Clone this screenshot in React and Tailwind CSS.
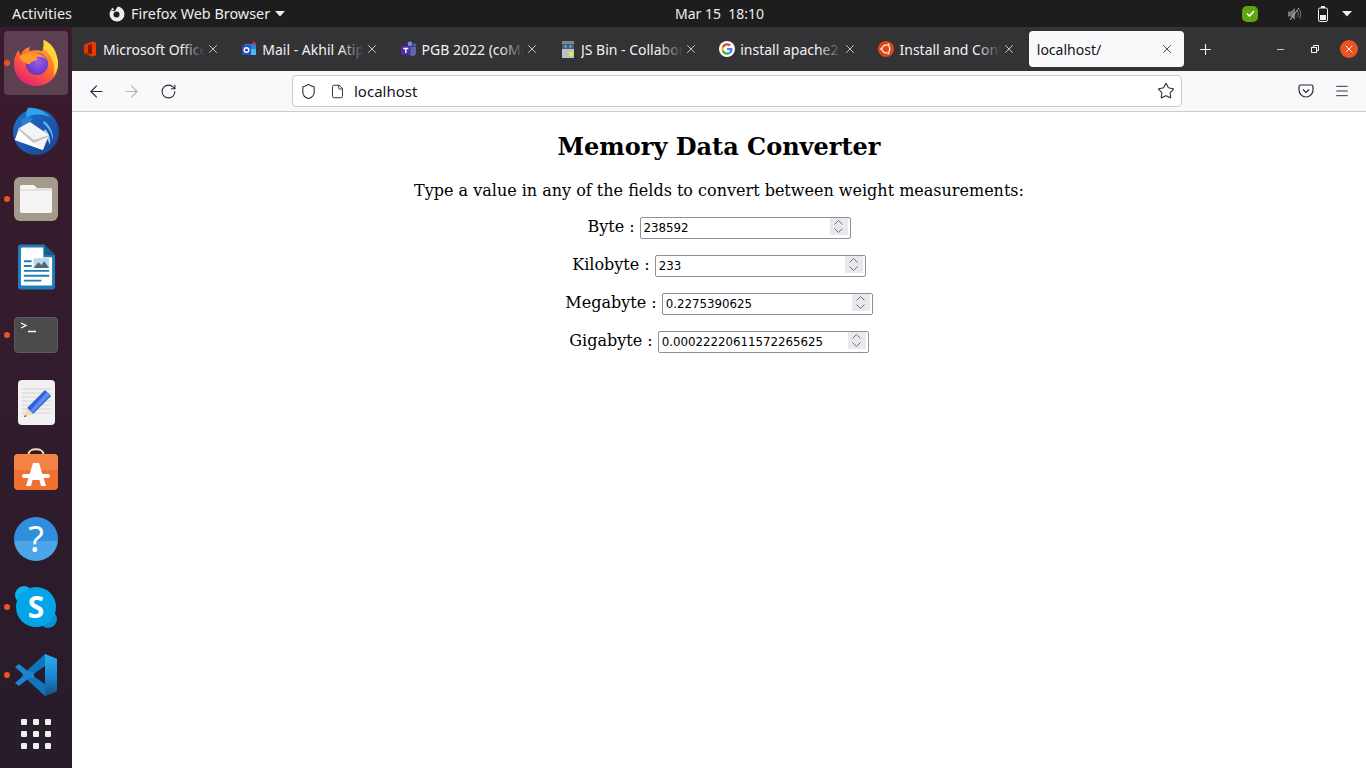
import React from 'react'
import { ArrowLeft, ArrowRight, RotateCw, Shield, File, Star, Menu, X, Plus, Minus } from 'lucide-react'

const OfficeIcon = () => (
    <svg width="14" height="16" viewBox="0 0 14 16">
        <path d="M1 3.500 9 .5l4 1.200v12.600l-4 1.200-8-3z" fill="#d83b01" />
        <path d="M5 4.500 9 3v10l-8-.5 4-.8z" fill="#8f1208" />
        <path d="M9 .5l4 1.200v12.600l-4 1.200z" fill="#eb3c00" />
    </svg>
)

const OutlookIcon = () => (
    <svg width="16" height="16" viewBox="0 0 16 16">
        <rect x="4" y="3" width="11" height="11" fill="#1a8fdc" />
        <rect x="9" y="8" width="6" height="6" fill="#50b4ee" />
        <rect x="1" y="4" width="9" height="10" rx="1" fill="#2a4fc0" />
        <circle cx="5.500" cy="9" r="2.300" fill="none" stroke="#fff" strokeWidth="1.400" />
        <circle cx="13" cy="2.500" r="1.800" fill="#d13438" />
    </svg>
)

const TeamsIcon = () => (
    <svg width="16" height="16" viewBox="0 0 16 16">
        <circle cx="9" cy="3" r="2.400" fill="#7b83eb" />
        <circle cx="13.500" cy="4" r="1.800" fill="#5059c9" />
        <path d="M6 6h9v5a3.500 3.500 0 0 1-7 1z" fill="#6264a7" />
        <rect x="0" y="5" width="9.500" height="9" rx="1" fill="#4b2fa8" />
        <path d="M2.300 7.500h5M4.800 7.500v4.600" stroke="#fff" strokeWidth="1.400" />
    </svg>
)

const JsBinIcon = () => (
    <svg width="14" height="17" viewBox="0 0 14 17">
        <rect x="1" y="0" width="12" height="3" fill="#7b8a92" />
        <rect x="1" y="3" width="12" height="5" fill="#4a5f6b" />
        <rect x="3.500" y="4.500" width="2" height="2" fill="#5ec8f0" />
        <rect x="8.500" y="4.500" width="2" height="2" fill="#5ec8f0" />
        <rect x="1" y="8" width="12" height="9" fill="#b9c2c7" />
        <rect x="8" y="11" width="4" height="4" fill="#f0e63c" />
    </svg>
)

const GoogleIcon = () => (
    <svg width="16" height="16" viewBox="0 0 48 48">
        <circle cx="24" cy="24" r="24" fill="#fff" />
        <g transform="translate(7 7) scale(.71)">
            <path fill="#EA4335" d="M24 9.500c3.500 0 6.700 1.200 9.200 3.600l6.900-6.900C35.900 2.400 30.400 0 24 0 14.600 0 6.500 5.400 2.600 13.200l8 6.200C12.500 13.700 17.800 9.500 24 9.500z" />
            <path fill="#4285F4" d="M46.900 24.500c0-1.600-.1-3.100-.4-4.500H24v9h12.900c-.6 3-2.200 5.500-4.700 7.200l7.700 6c4.500-4.200 7-10.300 7-17.700z" />
            <path fill="#FBBC05" d="M10.500 28.600A14.500 14.500 0 0 1 10.500 19.400l-8-6.200a24 24 0 0 0 0 21.600z" />
            <path fill="#34A853" d="M24 48c6.500 0 11.900-2.100 15.900-5.800l-7.700-6c-2.200 1.500-4.900 2.300-8.200 2.300-6.200 0-11.500-4.200-13.400-9.900l-8 6.200C6.500 42.600 14.600 48 24 48z" />
        </g>
    </svg>
)

const UbuntuIcon = () => (
    <svg width="16" height="16" viewBox="0 0 16 16">
        <circle cx="8" cy="8" r="8" fill="#dd4814" />
        <circle cx="8" cy="8" r="3.800" fill="none" stroke="#fff" strokeWidth="1.300" />
        <circle cx="3.200" cy="8" r="1.300" fill="#fff" stroke="#dd4814" strokeWidth=".5" />
        <circle cx="10.400" cy="3.800" r="1.300" fill="#fff" stroke="#dd4814" strokeWidth=".5" />
        <circle cx="10.400" cy="12.200" r="1.300" fill="#fff" stroke="#dd4814" strokeWidth=".5" />
    </svg>
)

const tabs = [
    { title: 'Microsoft Office Home', icon: <OfficeIcon /> },
    { title: 'Mail - Akhil Atipamula', icon: <OutlookIcon /> },
    { title: 'PGB 2022 (coMakeIT)', icon: <TeamsIcon /> },
    { title: 'JS Bin - Collaborative', icon: <JsBinIcon /> },
    { title: 'install apache2 ubuntu', icon: <GoogleIcon /> },
    { title: 'Install and Configure', icon: <UbuntuIcon /> },
]

const FirefoxIcon = () => (
    <svg width="46" height="46" viewBox="0 0 46 46">
        <defs>
            <linearGradient id="ffBody" x1="0.8" y1="0" x2="0.2" y2="1">
                <stop offset="0" stopColor="#ffbd2e" />
                <stop offset=".5" stopColor="#ff6a2a" />
                <stop offset="1" stopColor="#e5177e" />
            </linearGradient>
            <radialGradient id="ffGlobe" cx=".55" cy=".4" r=".7">
                <stop offset="0" stopColor="#9b5cf0" />
                <stop offset="1" stopColor="#5b2fb8" />
            </radialGradient>
        </defs>
        <path d="M23 46C10 46 1 36 1 24c0-6 2-11 5-14 0 3 1 4 2 5 1-4 4-7 9-8-1 2-1 3 0 4 4-1 8-1 12 0 2-3 2-7 1-11 7 3 11 9 13 15 2 4 2 7 2 10 0 12-10 21-22 21z" fill="url(#ffBody)" />
        <path d="M31 0c7 3 12 10 13 17 2 6 1 13-3 18 1-7 0-15-5-21-2-3-5-4-6-6 1-3 1-5 1-8z" fill="#ffd43a" />
        <circle cx="24" cy="24" r="11" fill="url(#ffGlobe)" />
        <path d="M6 17c4-3 9-5 14-4 6 0 11 2 14 7-3-3-7-4-11-3 2 1 2 3 0 3.500-4 .5-6 2-6 4-5-1-9-4-11-7.500z" fill="#ff9a2a" />
    </svg>
)

const ThunderbirdIcon = () => (
    <svg width="48" height="48" viewBox="0 0 48 48">
        <defs>
            <linearGradient id="tbBird" x1="0" y1="0" x2="1" y2="1">
                <stop offset="0" stopColor="#1b76d2" />
                <stop offset="1" stopColor="#1d3f8e" />
            </linearGradient>
        </defs>
        <circle cx="24" cy="25" r="23" fill="url(#tbBird)" />
        <path d="M16 1c6-1 16 2 22 9-7-3-13-3-17-2-3 1-5 2-7 3 0-4 0-7 2-10z" fill="#2fa3ee" />
        <path d="M9 13c4-3 9-3 12-1l-5 5-6 3z" fill="#2f7fd0" />
        <path d="M32 14c6 4 10 12 9 20-1-7-4-13-10-18z" fill="#5bbcf5" />
        <path d="M33 22c4 4 6 10 5 16-2-5-4-9-7-12z" fill="#8ed0f7" />
        <path d="M7 21 18 15 37 28 31 43 3 33z" fill="#f4f4f4" />
        <path d="M7 21 22 33 37 28 36 30 21 36 6 23z" fill="#c4c4c4" />
        <path d="M3 33 7 23 20 35 31 43z" fill="#ffffff" />
    </svg>
)

const FilesIcon = () => (
    <div className="w-[44px] h-[44px] rounded-[6px] bg-[#a39b8b] flex items-center justify-center">
        <svg width="32" height="28" viewBox="0 0 32 28">
            <path d="M2 0h12l3 3h13a2 2 0 0 1 2 2v21a2 2 0 0 1-2 2H2a2 2 0 0 1-2-2V2a2 2 0 0 1 2-2z" fill="#f6f5f4" />
            <path d="M0 4h15l2-1h13a2 2 0 0 1 2 2v1H0z" fill="#e4e2df" />
        </svg>
    </div>
)

const WriterIcon = () => (
    <svg width="37" height="46" viewBox="0 0 38 46">
        <path d="M3 0h24l11 11v32a3 3 0 0 1-3 3H3a3 3 0 0 1-3-3V3a3 3 0 0 1 3-3z" fill="#1a7fb8" />
        <path d="M4 3h22v10h9v28a1 1 0 0 1-1 1H4a1 1 0 0 1-1-1V4a1 1 0 0 1 1-1z" fill="#fff" />
        <path d="M27 0l11 11H27z" fill="#135f8c" />
        <path d="M6 16h8v2H6zM6 21h8v2H6zM6 26h26v2H6zM6 31h26v2H6zM6 36h18v2H6z" fill="#1a7fb8" />
        <rect x="16" y="14" width="16" height="10" fill="#bcd8e8" />
        <path d="M16 24l5-6 3 3 3-4 5 7z" fill="#4a6a7c" />
    </svg>
)

const TerminalIcon = () => (
    <div className="relative w-[44px] h-[36px] rounded-[4px] bg-[#4b4b4b] border border-[#5c5c5c]">
        <svg className="absolute left-[5px] top-[4px]" width="16" height="11" viewBox="0 0 16 11" fill="none" stroke="#fff" strokeWidth="1.300">
            <path d="M1 1l5 2.500L1 6M8 9.500h8" />
        </svg>
    </div>
)

const GeditIcon = () => (
    <svg width="37" height="46" viewBox="0 0 37 46">
        <rect x="0" y="0" width="37" height="45" rx="4" fill="#f1f1f1" />
        <path d="M4 9h29M4 13h29M4 17h29M4 21h29M4 25h29M4 29h29M4 33h29" stroke="#d2d2d2" strokeWidth="1" />
        <path d="M27 10l6 6-18 18-6-6z" fill="#2e62d9" />
        <path d="M29 12l3 3-18 18-2-2z" fill="#5f8cf0" />
        <path d="M9 28l6 6-9 3z" fill="#f6d9b0" />
        <path d="M7 35l-1 2 2.500-.8z" fill="#333" />
    </svg>
)

const SoftwareIcon = () => (
    <svg className="mb-[4px]" width="44" height="43" viewBox="0 0 44 43">
        <path d="M14.500 8V6.500c0-7 15-7 15 0V8" fill="none" stroke="#f8dcae" strokeWidth="2" />
        <rect x="0" y="6" width="44" height="36" rx="4" fill="#f07030" />
        <path d="M0 22V10a4 4 0 0 1 4-4h36a4 4 0 0 1 4 4v12z" fill="#f38444" />
        <path d="M19 15h6l7 23h-5l-1.500-6h-7L17 38h-5z" fill="#fff" />
        <rect x="8" y="26" width="28" height="4" rx="2" fill="#fff" />
    </svg>
)

const HelpIcon = () => (
    <div className="w-[44px] h-[44px] rounded-full bg-[linear-gradient(#2f8fdc_0_54%,#4aa6e8_54%_100%)] flex items-center justify-center">
        <span className="text-white text-[36px] leading-[44px] font-['Noto_Sans',sans-serif]">?</span>
    </div>
)

const SkypeIcon = () => (
    <div className="relative w-[42px] h-[42px]">
        <div className="absolute left-0 top-0 w-[18px] h-[18px] rounded-full bg-[#0fb4ea]" />
        <div className="absolute right-0 bottom-0 w-[18px] h-[18px] rounded-full bg-[#0a90d8]" />
        <div className="absolute left-[1px] top-[1px] w-[40px] h-[40px] rounded-full bg-[#03a5e8] flex items-center justify-center">
            <span className="text-white text-[30px] font-bold leading-[40px] font-['Noto_Sans',sans-serif]">S</span>
        </div>
    </div>
)

const VsCodeIcon = () => (
    <svg width="44" height="44" viewBox="0 0 44 44">
        <defs>
            <linearGradient id="vsSide" x1="0" y1="0" x2="0" y2="1">
                <stop offset="0" stopColor="#2aaef2" />
                <stop offset=".55" stopColor="#1a85d0" />
                <stop offset="1" stopColor="#174f80" />
            </linearGradient>
        </defs>
        <path d="M31 1 43 6v32l-12 5-23-21z" fill="#0f75bc" />
        <path d="M31 1l12 5v32l-12 5 0-13V13z" fill="url(#vsSide)" />
        <path d="M31 13 18 22l13 9z" fill="#281b2b" />
        <path d="M5 11 1 14l9 8-9 8 4 3 10-8 5 0 0-6-5 0z" fill="#1a85d0" />
    </svg>
)

const dockItems = [
    { icon: <FirefoxIcon />, running: true, active: true },
    { icon: <ThunderbirdIcon /> },
    { icon: <FilesIcon />, running: true },
    { icon: <WriterIcon /> },
    { icon: <TerminalIcon />, running: true },
    { icon: <GeditIcon /> },
    { icon: <SoftwareIcon /> },
    { icon: <HelpIcon /> },
    { icon: <SkypeIcon />, running: true },
    { icon: <VsCodeIcon />, running: true },
]

const Dock = () => (
    <div className="w-[72px] shrink-0 h-full flex flex-col pt-[2px] bg-gradient-to-b from-[#3c1a2e] to-[#261c2a]">
        {dockItems.map((item, i) => (
            <div key={i} className="relative h-[68px] flex items-center justify-center">
                {item.active && <div className="absolute left-[4px] top-[2px] w-[64px] h-[64px] rounded-[4px] bg-[#ffffff2b]" />}
                {item.running && <div className="absolute left-[4px] top-[31px] w-[6px] h-[6px] rounded-full bg-[#e95420]" />}
                <div className="relative flex">{item.icon}</div>
            </div>
        ))}
        <div className="h-[48px] pt-[2px] flex items-center justify-center">
            <div className="grid grid-cols-3 gap-x-[6px] gap-y-[6px]">
                {Array.from({ length: 9 }).map((_, i) => (
                    <div key={i} className="w-[6px] h-[6px] rounded-[1px] bg-[#eeeeee]" />
                ))}
            </div>
        </div>
    </div>
)

const TopBar = () => (
    <div className="h-[27px] shrink-0 bg-[#1d1d1d] text-[#eeeeee] flex items-center relative text-[14.400px] font-['Noto_Sans',sans-serif]">
        <span className="ml-[12px]">Activities</span>
        <svg className="ml-[37px]" width="16" height="16" viewBox="0 0 16 16">
            <circle cx="8" cy="8" r="7.500" fill="#eee" />
            <circle cx="7.500" cy="8.500" r="3" fill="#1d1d1d" />
            <path d="M0 5 5 4 3 0h6L6 5z" fill="#1d1d1d" />
        </svg>
        <span className="ml-[6px]">Firefox Web Browser</span>
        <svg className="ml-[5px]" width="10" height="6" viewBox="0 0 10 6"><path d="M0 0h10L5 5.500z" fill="#eee" /></svg>
        <span className="absolute left-[675px] text-[14px]">Mar 15&nbsp;&nbsp;18:10</span>
        <div className="ml-auto flex items-center">
            <div className="w-[16px] h-[16px] rounded-[5px] bg-[#5da60f] flex items-center justify-center">
                <svg width="9" height="7" viewBox="0 0 9 7" fill="none" stroke="#fff" strokeWidth="1.600"><path d="M1 3.500 3.500 6 8 1" /></svg>
            </div>
            <svg className="ml-[29px]" width="16" height="16" viewBox="0 0 16 16" fill="none">
                <path d="M1 5.500h3L8 2v12L4 10.500H1z" fill="#777" />
                <path d="M10.500 5c1 2 1 4 0 6M12.500 3.500c1.700 3 1.700 6 0 9" stroke="#777" strokeWidth="1" />
                <path d="M3 14 12 2" stroke="#bbb" strokeWidth="1" />
            </svg>
            <svg className="ml-[15px]" width="10" height="16" viewBox="0 0 10 16" fill="none">
                <rect x=".5" y="2" width="9" height="13.500" rx="1.500" stroke="#eee" />
                <rect x="3" y="0" width="4" height="2" fill="#eee" />
                <rect x="2" y="9" width="6" height="5" fill="#eee" />
            </svg>
            <svg className="ml-[14px] mr-[14px]" width="10" height="6" viewBox="0 0 10 6"><path d="M0 0h10L5 5.500z" fill="#eee" /></svg>
        </div>
    </div>
)

const TabBar = () => (
    <div className="h-[44px] shrink-0 bg-[#333235] flex items-center pl-[1px] font-['Noto_Sans',sans-serif] text-[14px]">
        {tabs.map((tab) => (
            <div key={tab.title} className="w-[159.300px] shrink-0 flex items-center pl-[9px]">
                <div className="w-[16px] flex justify-center">{tab.icon}</div>
                <div className="relative ml-[5px] w-[102px] overflow-hidden whitespace-nowrap text-[#f2f2f2]">
                    {tab.title}
                    <div className="absolute right-0 top-0 bottom-0 w-[24px] bg-gradient-to-r from-[#33323500] to-[#333235]" />
                </div>
                <X size={14} strokeWidth={1.300} className="ml-[1px] text-[#f2f2f2]" />
            </div>
        ))}
        <div className="w-[155px] h-[36px] shrink-0 rounded-[4px] bg-[#f9f9fb] text-[#15141a] flex items-center justify-between pl-[8px] pr-[10px]">
            <span>localhost/</span>
            <X size={14} strokeWidth={1.300} />
        </div>
        <Plus size={17} strokeWidth={1.600} className="ml-[13px] text-[#f2f2f2]" />
        <Minus size={11} strokeWidth={1.700} className="ml-[61px] text-[#f2f2f2]" />
        <svg className="ml-[24px]" width="10" height="10" viewBox="0 0 10 10" fill="none" stroke="#f2f2f2">
            <rect x="1.500" y="3.500" width="5" height="5" />
            <path d="M3.500 3.500v-2h5v5h-2" />
        </svg>
        <div className="ml-[20px] w-[18px] h-[18px] rounded-full bg-[#e95420] flex items-center justify-center">
            <X size={12} strokeWidth={1.800} className="text-white" />
        </div>
    </div>
)

const Toolbar = () => (
    <div className="h-[41px] shrink-0 bg-[#f9f9fb] border-b border-[#cccccc] flex items-center text-[#2b2a33] font-['Noto_Sans',sans-serif]">
        <ArrowLeft size={19} strokeWidth={1.400} className="ml-[15px]" />
        <ArrowRight size={19} strokeWidth={1.400} className="ml-[16px] text-[#b4b4b8]" />
        <RotateCw size={17} strokeWidth={1.500} className="ml-[19px]" />
        <div className="ml-[115px] w-[890px] h-[32px] bg-white border border-[#c9c9cc] rounded-[4px] flex items-center">
            <Shield size={17} strokeWidth={1.500} className="ml-[7px]" />
            <File size={15} strokeWidth={1.500} className="ml-[13px]" />
            <span className="ml-[9px] text-[15px] text-[#15141a]">localhost</span>
            <Star size={18} strokeWidth={1.400} className="ml-auto mr-[6px]" />
        </div>
        <svg className="ml-[116px]" width="16" height="14" viewBox="0 0 16 14" fill="none" stroke="#2b2a33" strokeWidth="1.200">
            <path d="M2.500 1h11A1.500 1.500 0 0 1 15 2.500V6a7 7 0 0 1-14 0V2.500A1.500 1.500 0 0 1 2.500 1z" />
            <path d="M5 5.500l3 3 3-3" />
        </svg>
        <Menu size={16} strokeWidth={1.400} className="ml-[20px]" />
    </div>
)

const Field = ({ label, value }) => (
    <div className="h-[38px] flex items-center justify-center gap-[5px]">
        <span>{label} :</span>
        <div className="relative w-[211px] h-[22px] mb-[2px]">
            <input
                readOnly
                value={value}
                className="w-full h-full border border-[#8f8f9d] rounded-[2px] bg-white pl-[3px] pr-[22px] pt-[1px] text-[11.800px] text-black font-['DejaVu_Sans',sans-serif] outline-none"
            />
            <div className="absolute right-[3px] top-[3px] w-[18px] h-[17px] bg-[#e9e9ed] flex items-center justify-center">
                <svg width="11" height="15" viewBox="0 0 11 15" fill="none" stroke="#6f6f78" strokeWidth="1">
                    <path d="M1.500 5.500 5.500 1.500l4 4M1.500 9.500l4 4 4-4" />
                </svg>
            </div>
        </div>
    </div>
)

const Page = () => (
    <div className="flex-1 bg-white text-black text-center font-['DejaVu_Serif',serif] text-[16px]">
        <h2 className="mt-[21px] text-[24px] leading-[28px] font-bold">Memory Data Converter</h2>
        <p className="mt-[20px] leading-[19px]">Type a value in any of the fields to convert between weight measurements:</p>
        <div className="mt-[8px]">
            <Field label="Byte" value="238592" />
            <Field label="Kilobyte" value="233" />
            <Field label="Megabyte" value="0.2275390625" />
            <Field label="Gigabyte" value="0.00022220611572265625" />
        </div>
    </div>
)

const App = () => {
    return (
        <div className="w-[1366px] h-[768px] overflow-hidden flex flex-col">
            <TopBar />
            <div className="flex-1 flex min-h-0">
                <Dock />
                <div className="flex-1 flex flex-col min-w-0">
                    <TabBar />
                    <Toolbar />
                    <Page />
                </div>
            </div>
        </div>
    )
}

export default App
